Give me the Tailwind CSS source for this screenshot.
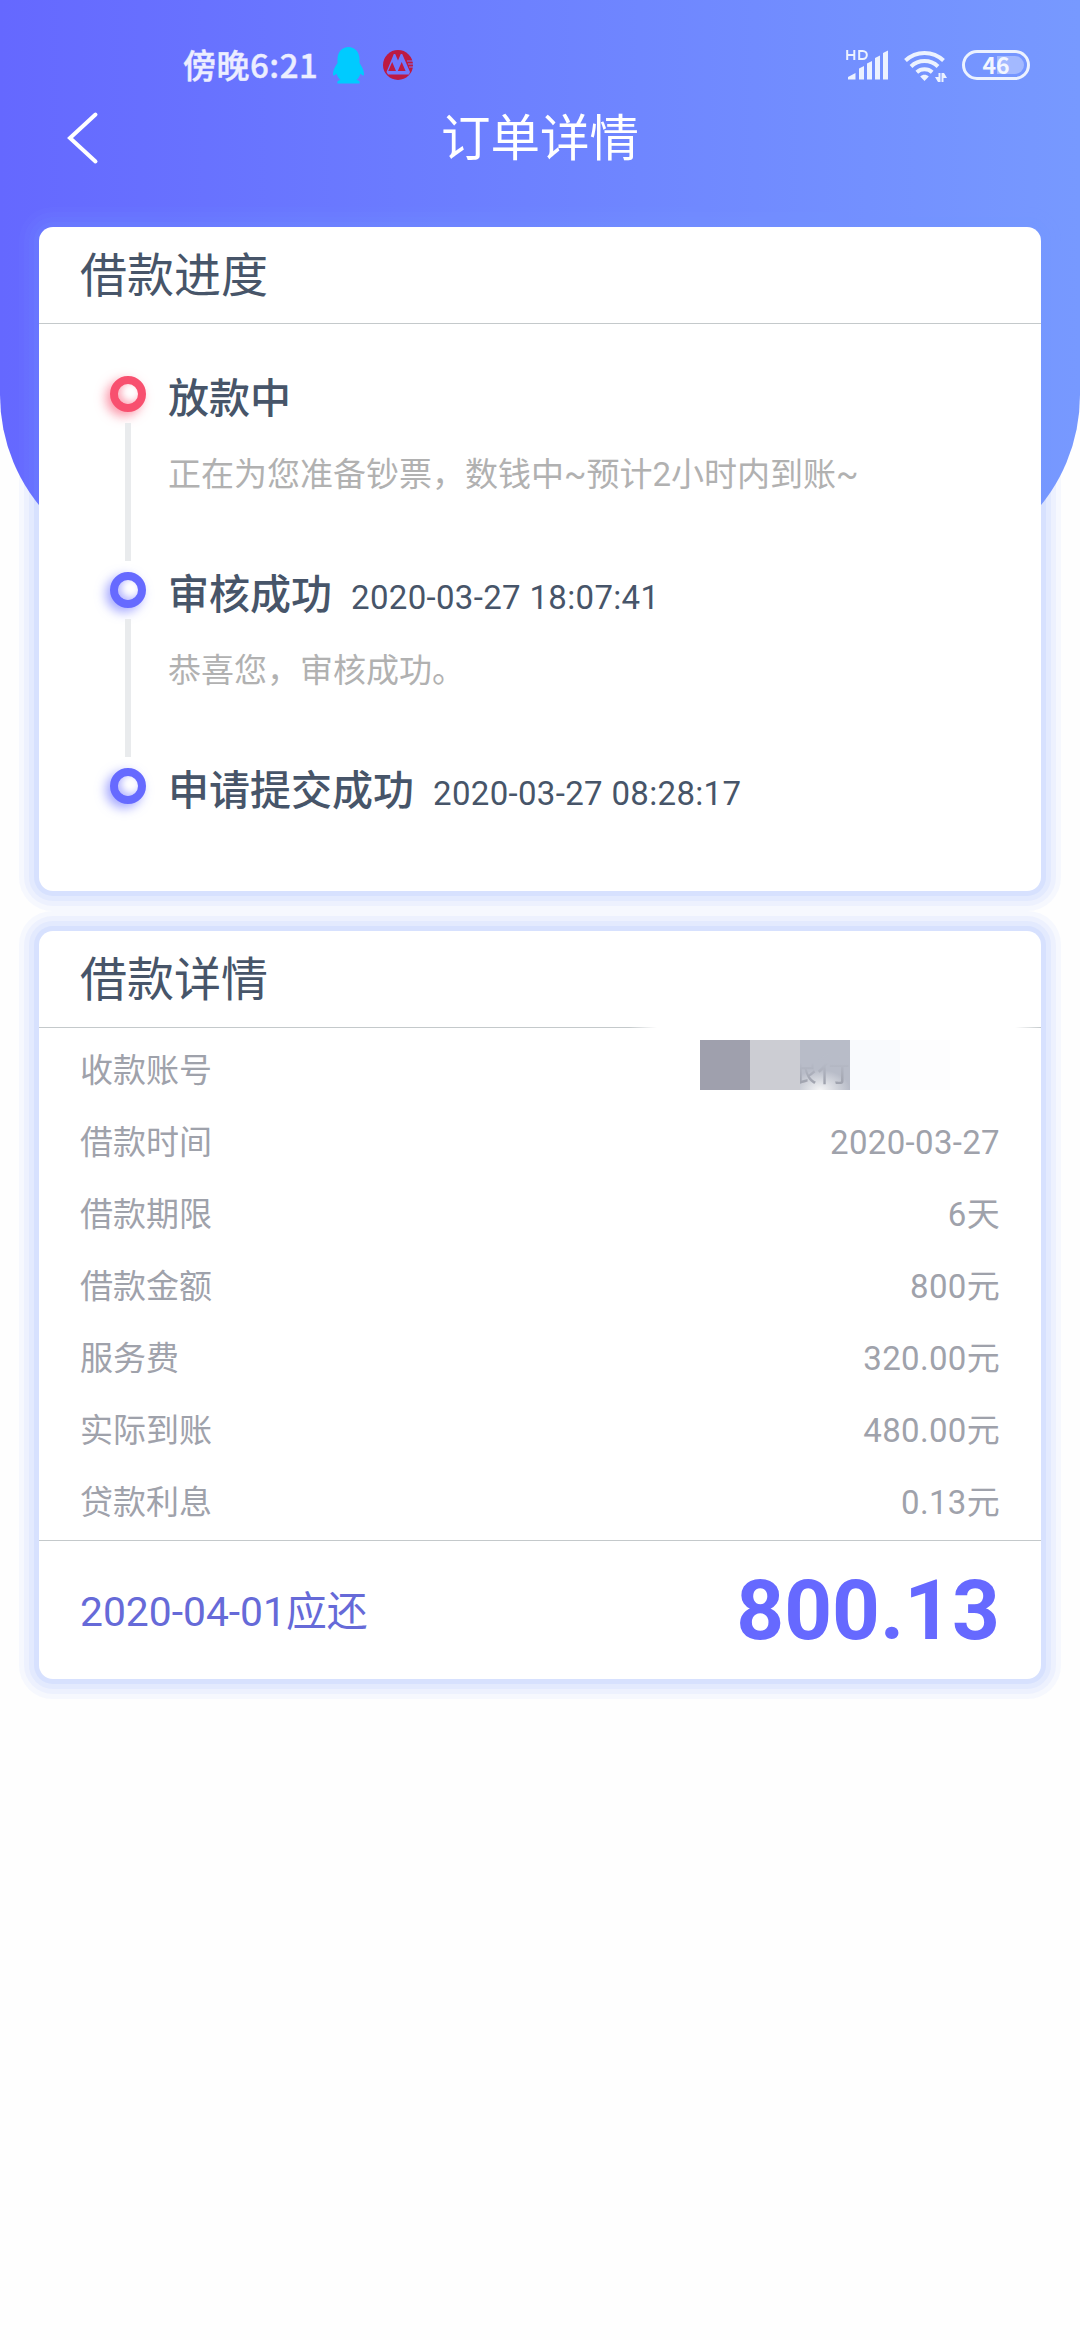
<!DOCTYPE html>
<html lang="zh-CN">
<head>
    <meta charset="UTF-8">
    <meta name="viewport" content="width=device-width, initial-scale=1.0">
    <title>订单详情</title>
    <script src="https://cdn.jsdelivr.net/npm/@tailwindcss/browser@4"></script>
    <style>
        body {
            font-family: Roboto, 'Noto Sans CJK SC', sans-serif;
        }
    </style>
</head>
<body class="relative bg-[#fefefe] min-h-screen overflow-x-hidden">

    <!-- 顶部渐变背景 -->
    <div class="absolute inset-x-0 top-0 h-[570px] rounded-b-[175px] bg-linear-to-r from-[#6568ff] to-[#7799ff]"></div>

    <div class="relative">
        <!-- 状态栏 -->
        <div class="h-[96px] pt-[34px] pl-[183px] pr-[50px] flex justify-between text-[#eceeff]">
            <div class="flex items-center h-[62px]">
                <span class="w-[150px] text-[33px] leading-[60px] -mt-[2px] font-medium tracking-[0.5px] font-['Noto_Sans_CJK_SC',sans-serif] [-webkit-text-stroke:0.4px]">傍晚6:21</span>
                <svg class="w-[31px] h-[37px]" viewBox="0 0 31 37" fill="#00cbff">
                    <path d="M15.500 0C9 0 4.800 5 4.500 11.500v4.500C2 19.500 0 23.500 0 27c0 2 .8 2.200 3.500-.5.7 2.700 2 4.800 4 6.500-3 .3-3.500 1.500-3 3.500h22c.5-2 0-3.200-3-3.500 2-1.700 3.300-3.800 4-6.500C30.200 29.200 31 29 31 27c0-3.500-2-7.500-4.500-11v-4.500C26.200 5 22 0 15.500 0z"/>
                </svg>
                <svg class="w-[30px] h-[30px] ml-[19px]" viewBox="0 0 30 30">
                    <circle cx="15" cy="15" r="15" fill="#bd1a42"/>
                    <path d="M3.500 22 10.800 4h1.400L15 10.500 17.800 4h1.400L25.500 18.500 27 22l-1 2.500H5z" fill="#7078ff"/>
                    <path d="M5.200 21 9.200 12l3.800 9zM14.800 21l3.900-9 3.900 9z" fill="#bd1a42"/>
                    <path d="M24 11h6M25 14h5M26 17h4" stroke="#7078ff" stroke-width="1.200"/>
                </svg>
            </div>
            <div class="flex items-center h-[62px]">
                <svg class="w-[43px] h-[32px]" viewBox="0 0 43 32" fill="#ecf2ff">
                    <path d="M1.200 1v10M8.300 1v10M1.200 6h7.100" fill="none" stroke="#ecf2ff" stroke-width="2"/>
                    <path d="M13.200 2v8h3.500c5.500 0 5.500-8 0-8z" fill="none" stroke="#ecf2ff" stroke-width="2"/>
                    <path d="M2 30.500v-2.500l7.500-4v6.500zM13 30.500V19.500l5-2.500v13.500zM21 30.500V14.500l5-2.500v18.500zM29 30.500V9l5-2.500v24zM37 30.500V4l5-2.500v29z"/>
                </svg>
                <svg class="w-[44px] h-[34px] ml-[14px]" viewBox="0 0 44 34" fill="none" stroke="#ecf2ff" stroke-width="4">
                    <path d="M2.500 12.500a27.500 27.500 0 0 1 38 0M8 18.500a19.500 19.500 0 0 1 27 0M13.800 24.300a11.500 11.500 0 0 1 15.400 0"/>
                    <path d="M17.200 28.500c2.500-2.200 6.100-2.200 8.600 0L21.500 33z" fill="#ecf2ff" stroke="none"/>
                    <path d="M36.500 25v9M39.500 34v-9" stroke-width="2"/>
                    <path d="M36 34h-1l-3-5h4zM40 25h1l3 5h-4z" fill="#ecf2ff" stroke="none"/>
                </svg>
                <div class="relative w-[68px] h-[30px] ml-[15px] rounded-full border-3 border-[#ecf2ff]">
                    <div class="absolute right-[3px] top-[3px] w-[27px] h-[18px] rounded-r-full bg-[#a3b9ff]"></div>
                    <span class="absolute inset-0 text-center text-[23px] leading-[23px] font-bold font-['Noto_Sans_CJK_SC',sans-serif] text-[#f2f6ff]">46</span>
                </div>
            </div>
        </div>

        <!-- 标题栏 -->
        <header class="h-[131px] grid grid-cols-[1fr_auto_1fr] items-start px-[66px] text-white">
            <svg class="w-[34px] h-[54px] mt-[15px]" viewBox="0 0 34 54" fill="none" stroke="currentColor" stroke-width="4" stroke-linecap="round">
                <path d="M29.500 3.500 4 27l25.500 23.500"/>
            </svg>
            <h1 class="text-[49.500px] leading-[87px]">订单详情</h1>
        </header>

        <main class="px-[39px] flex flex-col gap-[40px]">
            <!-- 借款进度 -->
            <section class="h-[664px] bg-white rounded-[14px] shadow-[0_0_0_5px_#799bff1c,0_0_0_10px_#799bff14,0_0_0_15px_#799bff12,0_0_0_20px_#799bff0f]">
                <h2 class="h-[97px] pl-[41px] border-b border-[#c4c9cb] text-[47px] leading-[98px] text-[#475569]">借款进度</h2>
                <ul class="pt-[43px] pl-[70px]">
                    <li class="flex h-[196px]">
                        <div class="w-[37px] flex flex-col items-center pt-[9px]">
                            <div class="size-[36px] shrink-0 rounded-full border-8 border-[#f8506f] bg-white shadow-[-4px_4px_11px_#f8506f99,inset_3px_-2px_7px_#f8506f77]"></div>
                            <div class="w-[6px] h-[138px] shrink-0 mt-[11px] bg-[#e9ebed]"></div>
                        </div>
                        <div class="pt-[2px] pl-[22px]">
                            <p class="h-[60px] text-[41px] leading-[60px] font-medium text-[#475569]">放款中</p>
                            <p class="mt-[22px] text-[33px] leading-[48px] text-[#b1b1b1]">正在为您准备钞票，数钱中~预计2小时内到账~</p>
                        </div>
                    </li>
                    <li class="flex h-[196px]">
                        <div class="w-[37px] flex flex-col items-center pt-[9px]">
                            <div class="size-[36px] shrink-0 rounded-full border-8 border-[#666aff] bg-white shadow-[-4px_4px_11px_#666aff99,inset_3px_-2px_7px_#666aff77]"></div>
                            <div class="w-[6px] h-[138px] shrink-0 mt-[11px] bg-[#e9ebed]"></div>
                        </div>
                        <div class="pt-[2px] pl-[22px]">
                            <p class="h-[60px] flex items-baseline text-[41px] leading-[60px] font-medium text-[#475569]">审核成功<span class="ml-[19px] text-[33px] font-normal tracking-[0.330px]">2020-03-27 18:07:41</span></p>
                            <p class="mt-[22px] text-[33px] leading-[48px] text-[#b1b1b1]">恭喜您，审核成功。</p>
                        </div>
                    </li>
                    <li class="flex">
                        <div class="w-[37px] flex flex-col items-center pt-[9px]">
                            <div class="size-[36px] shrink-0 rounded-full border-8 border-[#666aff] bg-white shadow-[-4px_4px_11px_#666aff99,inset_3px_-2px_7px_#666aff77]"></div>
                        </div>
                        <div class="pt-[2px] pl-[22px]">
                            <p class="h-[60px] flex items-baseline text-[41px] leading-[60px] font-medium text-[#475569]">申请提交成功<span class="ml-[19px] text-[33px] font-normal tracking-[0.330px]">2020-03-27 08:28:17</span></p>
                        </div>
                    </li>
                </ul>
            </section>

            <!-- 借款详情 -->
            <section class="h-[748px] bg-white rounded-[14px] shadow-[0_0_0_5px_#799bff1c,0_0_0_10px_#799bff14,0_0_0_15px_#799bff12,0_0_0_20px_#799bff0f]">
                <h2 class="h-[96px] pl-[41px] text-[47px] leading-[98px] text-[#475569]">借款详情</h2>
                <div class="h-px bg-linear-to-r from-[#c4c9cb] from-[590px] via-transparent via-[618px] to-transparent to-[970px] flex justify-end">
                    <div class="w-[26px] bg-linear-to-r from-transparent to-[#c4c9cb]"></div>
                </div>
                <dl class="h-[512px] pt-[7px] pl-[41px] pr-[41px] text-[33px] leading-[72px] text-[#9fa2ab]">
                    <div class="flex justify-between h-[72px]">
                        <dt>收款账号</dt>
                        <!-- 打码的账号 -->
                        <dd class="flex h-[50px] w-[300px] mt-[5px]">
                            <span class="size-[50px] bg-[#9fa0ad]"></span>
                            <span class="size-[50px] bg-[#cccdd3]"></span>
                            <span class="flex justify-end size-[50px] overflow-hidden whitespace-nowrap bg-[radial-gradient(ellipse_30px_20px_at_40%_100%,#f4f5f6,#b8bcc8)]"><span class="leading-[60px] bg-linear-to-b from-[#b8bcc8] from-45% to-[#989ba6] bg-clip-text text-transparent">银行</span></span>
                            <span class="size-[50px] bg-[#f9fafd]"></span>
                            <span class="size-[50px] bg-[#fdfdfe]"></span>
                        </dd>
                    </div>
                    <div class="flex justify-between h-[72px]"><dt>借款时间</dt><dd class="tracking-[0.330px]">2020-03-27</dd></div>
                    <div class="flex justify-between h-[72px]"><dt>借款期限</dt><dd class="tracking-[0.330px]">6天</dd></div>
                    <div class="flex justify-between h-[72px]"><dt>借款金额</dt><dd class="tracking-[0.330px]">800元</dd></div>
                    <div class="flex justify-between h-[72px]"><dt>服务费</dt><dd class="tracking-[0.330px]">320.00元</dd></div>
                    <div class="flex justify-between h-[72px]"><dt>实际到账</dt><dd class="tracking-[0.330px]">480.00元</dd></div>
                    <div class="flex justify-between h-[72px]"><dt>贷款利息</dt><dd class="tracking-[0.330px]">0.13元</dd></div>
                </dl>
                <div class="h-[139px] pl-[41px] pr-[41px] border-t border-[#c4c9cb] flex items-center justify-between text-[#6669ff]">
                    <span class="pt-[3px] text-[40.800px] leading-[60px] text-[#666ad8]">2020-04-01应还</span>
                    <span class="pt-[1px] text-[83.500px] leading-[100px] font-bold">800.13</span>
                </div>
            </section>
        </main>
    </div>
</body>
</html>
